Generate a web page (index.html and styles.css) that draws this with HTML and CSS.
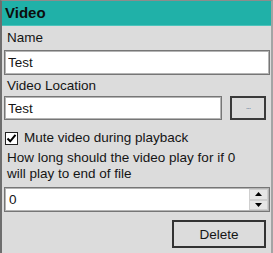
FILE: index.html
```html
<!DOCTYPE html>
<html lang="en">
<head>
    <meta charset="UTF-8">
    <meta name="viewport" content="width=device-width, initial-scale=1.0">
    <title>Video</title>
    <link rel="stylesheet" href="styles.css">
</head>
<body>
    <div class="panel">
        <div class="panel-header">Video</div>
        <div class="panel-body">
            <label class="field-label" for="videoName">Name</label>
            <input type="text" id="videoName" class="text-box" value="Test">

            <label class="field-label label-location" for="videoLocation">Video Location</label>
            <div class="location-row">
                <input type="text" id="videoLocation" class="text-box" value="Test">
                <button class="browse-btn">...</button>
            </div>

            <label class="check-row">
                <span class="check-box">
                    <svg width="11" height="11" viewBox="0 0 11 11"><path d="M1.5 5.5 L4.2 8.3 L9.5 1.8" fill="none" stroke="#000" stroke-width="2"/></svg>
                </span>
                Mute video during playback
            </label>

            <p class="hint">How long should the video play for if 0<br>will play to end of file</p>

            <div class="spin-box">
                <input type="text" class="spin-input" value="0">
                <div class="spin-buttons">
                    <span class="spin-btn"><svg width="7" height="4" viewBox="0 0 7 4"><path d="M0 4 L3.5 0 L7 4 Z" fill="#000"/></svg></span>
                    <span class="spin-btn"><svg width="7" height="4" viewBox="0 0 7 4"><path d="M0 0 L3.5 4 L7 0 Z" fill="#000"/></svg></span>
                </div>
            </div>

            <div class="actions">
                <button class="delete-btn">Delete</button>
            </div>
        </div>
    </div>
</body>
</html>
```

FILE: styles.css
```css
html, body {
    margin: 0;
    padding: 0;
    height: 253px;
    overflow: hidden;
}
body {
    font-family: "Liberation Sans", Arial, sans-serif;
    font-size: 13.5px;
    color: #151515;
    background-color: #dcdcdc;
}
.panel {
    box-sizing: border-box;
    width: 273px;
    height: 253px;
    border-top: 1px solid #8c8c8c;
    border-left: 2px solid #6e6e6e;
    border-right: 2px solid #a4a4a4;
    background-color: #dcdcdc;
}
.panel-header {
    height: 24px;
    border-bottom: 1px solid #4cc3bb;
    background-color: #20b1a8;
    color: #0d0d0d;
    font-size: 15px;
    font-weight: bold;
    line-height: 24px;
    padding-left: 3px;
}
.panel-body {
    padding: 0 1px 0 2px;
}
.field-label {
    display: block;
    line-height: 16px;
    margin-top: 4px;
    margin-bottom: 4px;
    padding-left: 3px;
}
.label-location {
    margin-top: 3px;
    margin-bottom: 2px;
}
.text-box {
    box-sizing: border-box;
    display: block;
    width: 100%;
    height: 25px;
    margin: 0;
    padding: 0 3px;
    border: 1px solid #767676;
    box-shadow: inset 0 0 0 1px #b4b4b4;
    background-color: #fff;
    font-family: "Liberation Sans", Arial, sans-serif;
    font-size: 13.5px;
    color: #151515;
    outline: none;
}
.location-row {
    display: flex;
    align-items: center;
}
.location-row .text-box {
    width: 218px;
    height: 24px;
}
.browse-btn {
    box-sizing: border-box;
    width: 36px;
    height: 24px;
    margin-left: 8px;
    padding: 0 0 4px;
    border: 2px solid #3a3a3a;
    background-color: #dcdcdc;
    color: #7d8fa8;
    font-family: "Liberation Sans", Arial, sans-serif;
    font-size: 9px;
    letter-spacing: -1px;
}
.check-row {
    display: flex;
    align-items: center;
    gap: 6px;
    margin-top: 10px;
    padding-left: 1px;
    line-height: 16px;
}
.check-box {
    box-sizing: border-box;
    display: flex;
    align-items: center;
    justify-content: center;
    width: 13px;
    height: 13px;
    border: 1px solid #222;
    background-color: #fff;
}
.hint {
    margin: 4px 0 0;
    padding-left: 3px;
    line-height: 16px;
}
.spin-box {
    box-sizing: border-box;
    display: flex;
    height: 25px;
    margin-top: 5px;
    border: 1px solid #767676;
    box-shadow: inset 0 0 0 1px #b4b4b4;
    background-color: #fff;
}
.spin-input {
    flex: 1;
    min-width: 0;
    margin: 0;
    padding: 0 4px;
    border: none;
    background: transparent;
    font-family: "Liberation Sans", Arial, sans-serif;
    font-size: 13.5px;
    color: #151515;
    outline: none;
}
.spin-buttons {
    display: flex;
    flex-direction: column;
    width: 19px;
    margin: 1px 1px 1px 0;
}
.spin-btn {
    flex: 1;
    display: flex;
    align-items: center;
    justify-content: center;
    background-color: #e6e6e6;
    border: 1px solid #cfcfcf;
}
.actions {
    display: flex;
    justify-content: flex-end;
    margin-top: 8px;
    padding-right: 4px;
}
.delete-btn {
    box-sizing: border-box;
    width: 94px;
    height: 28px;
    border: 2px solid #333;
    background-color: #dcdcdc;
    color: #151515;
    font-family: "Liberation Sans", Arial, sans-serif;
    font-size: 13.5px;
}
```
